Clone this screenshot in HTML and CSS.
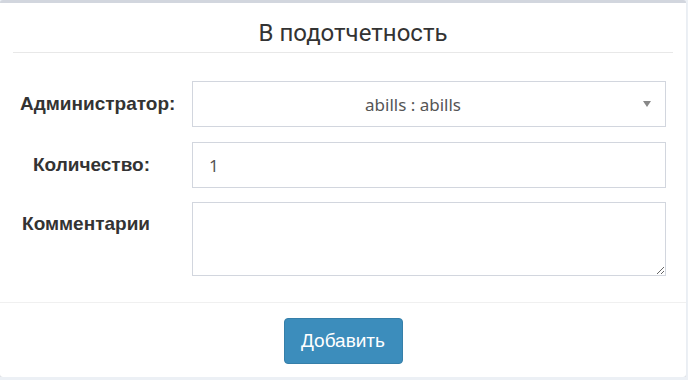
FILE: index.html
```html
<!DOCTYPE html>
<html lang="ru">
<head>
  <meta charset="UTF-8">
  <title>В подотчетность</title>
  <link rel="stylesheet" href="styles.css">
</head>
<body>
  <div class="box">
    <div class="box-header">
      <h3 class="box-title">В подотчетность</h3>
    </div>

    <div class="box-body">
      <div class="form-row">
        <label class="control-label">Администратор:</label>
        <div class="select-box">
          <span class="select-text">abills : abills</span>
          <span class="select-arrow"></span>
        </div>
      </div>

      <div class="form-row">
        <label class="control-label">Количество:</label>
        <input class="form-control" type="text" value="1">
      </div>

      <div class="form-row form-row-top">
        <label class="control-label">Комментарии</label>
        <textarea class="form-control textarea"></textarea>
      </div>
    </div>

    <div class="box-footer">
      <button class="btn-primary">Добавить</button>
    </div>
  </div>
</body>
</html>
```

FILE: styles.css
```css
body {
  margin: 0;
  background-color: #ecf0f5;
  font-family: "Liberation Sans", Arial, sans-serif;
}

.box {
  width: 686px;
  height: 377px;
  box-sizing: border-box;
  background-color: #fff;
  border-top: 3px solid #d2d6de;
  border-radius: 3px;
  box-shadow: 0 1px 1px rgba(0, 0, 0, 0.1);
  display: flex;
  flex-direction: column;
}

.box-header {
  margin: 0 13px;
  padding: 18px 0 7px 20px;
  border-bottom: 1px solid #e8e8e8;
  text-align: center;
}

.box-title {
  margin: 0;
  font-family: Roboto, sans-serif;
  font-weight: 400;
  font-size: 24px;
  line-height: 24px;
  color: #333;
}

.box-body {
  padding: 28px 20px 26px 0;
  display: flex;
  flex-direction: column;
  gap: 15px;
  flex: 1;
}

.form-row {
  display: flex;
  align-items: center;
}

.form-row-top {
  align-items: flex-start;
  margin-top: -1px;
}

.control-label {
  width: 130px;
  padding-left: 20px;
  margin-right: 42px;
  text-align: right;
  white-space: nowrap;
  font-weight: bold;
  font-size: 19px;
  color: #333;
}

.form-row-top .control-label {
  padding-top: 11px;
}

.select-box,
.form-control {
  flex: 1;
  height: 46px;
  box-sizing: border-box;
  border: 1px solid #d2d6de;
  background: #fff;
  color: #555;
  font-family: "Noto Sans", sans-serif;
  font-size: 17px;
}

.select-box {
  display: flex;
  align-items: center;
  padding: 0 14px 0 0;
}

.select-text {
  flex: 1;
  text-align: center;
  padding-right: 10px;
}

.select-arrow {
  width: 0;
  height: 0;
  border-left: 4px solid transparent;
  border-right: 4px solid transparent;
  border-top: 6px solid #888;
}

.form-control {
  padding: 0 16px;
  outline: none;
}

.textarea {
  height: 74px;
  resize: vertical;
  padding: 8px 12px;
}

.box-footer {
  border-top: 1px solid #f0f0f0;
  padding: 15px 0 13px;
  text-align: center;
}

.btn-primary {
  width: 119px;
  height: 46px;
  background-color: #3c8dbc;
  border: 1px solid #367fa9;
  border-radius: 4px;
  color: #fff;
  font-family: "Liberation Sans", Arial, sans-serif;
  font-size: 19px;
}
```
